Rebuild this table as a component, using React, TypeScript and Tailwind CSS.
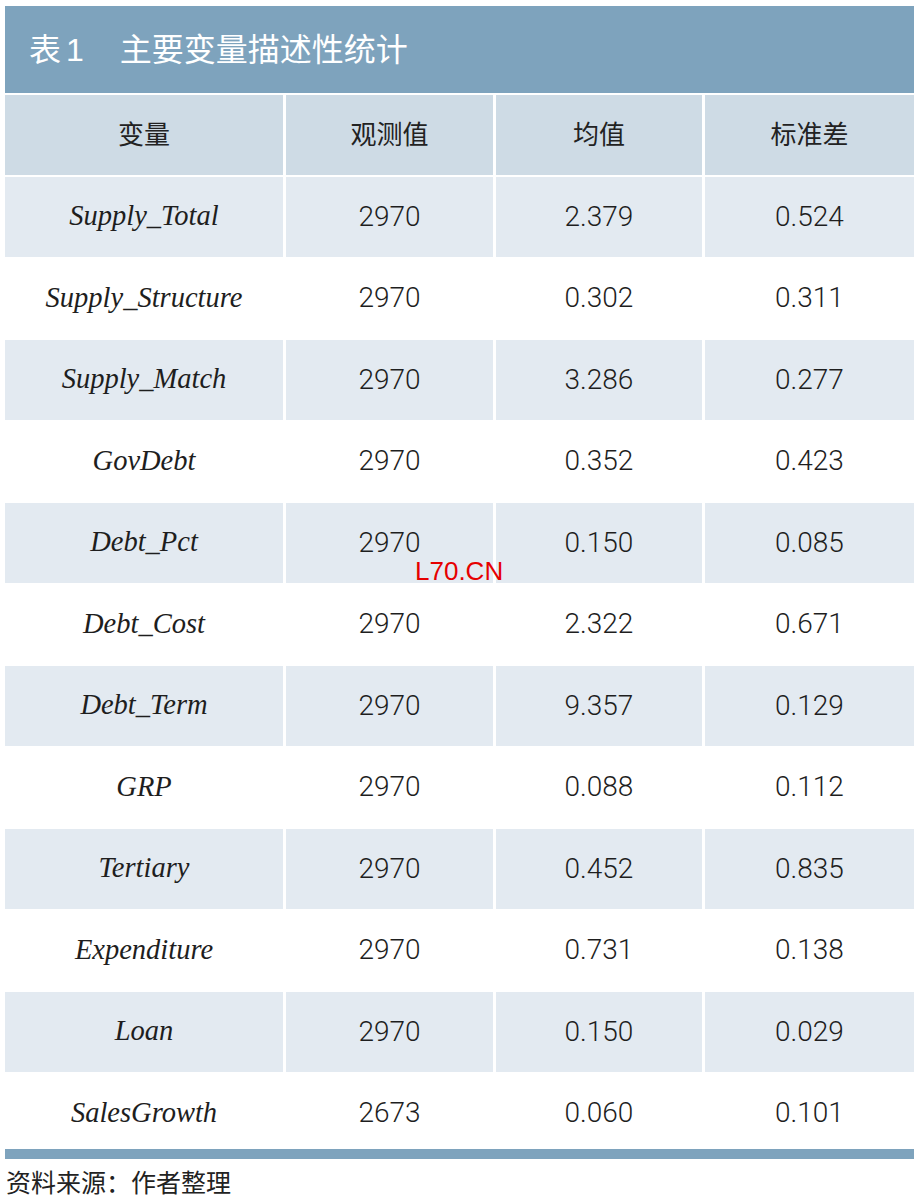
const rows = [
  ["Supply_Total", "2970", "2.379", "0.524"],
  ["Supply_Structure", "2970", "0.302", "0.311"],
  ["Supply_Match", "2970", "3.286", "0.277"],
  ["GovDebt", "2970", "0.352", "0.423"],
  ["Debt_Pct", "2970", "0.150", "0.085"],
  ["Debt_Cost", "2970", "2.322", "0.671"],
  ["Debt_Term", "2970", "9.357", "0.129"],
  ["GRP", "2970", "0.088", "0.112"],
  ["Tertiary", "2970", "0.452", "0.835"],
  ["Expenditure", "2970", "0.731", "0.138"],
  ["Loan", "2970", "0.150", "0.029"],
  ["SalesGrowth", "2673", "0.060", "0.101"],
];

const cjk = "font-['Liberation_Sans','Noto_Sans_CJK_SC',sans-serif]";

export default function App() {
  return (
    <div className="relative min-h-[1201px] w-[923px] bg-white pl-[5px] pt-[6px]">
      {/* title bar */}
      <div
        className={`flex h-[87px] w-[909px] items-center bg-[#7ea3bd] pl-[24px] text-[32px] leading-none text-white ${cjk}`}
      >
        <span>表</span>
        <span className="ml-[5px]">1</span>
        <span className="ml-[36px]">主要变量描述性统计</span>
      </div>

      <div className="mt-[2px] flex w-[909px] flex-col gap-[2px]">
        {/* header */}
        <div className="grid h-[80px] grid-cols-[278px_207px_206px_209px] gap-[3px]">
          {["变量", "观测值", "均值", "标准差"].map((h) => (
            <div
              key={h}
              className={`flex items-center justify-center bg-[#cedbe5] text-[26px] text-[#222] ${cjk}`}
            >
              {h}
            </div>
          ))}
        </div>

        {rows.map((r, i) => (
          <div
            key={r[0]}
            className={`grid grid-cols-[278px_207px_206px_209px] gap-[3px] ${
              i === rows.length - 1 ? "h-[75.5px] pt-[4px]" : "h-[79.5px]"
            }`}
          >
            {r.map((c, j) => (
              <div
                key={j}
                className={`flex items-center justify-center text-[#1e1e1e] ${
                  i % 2 === 0 ? "bg-[#e3eaf1]" : "bg-white"
                } ${
                  j === 0
                    ? "font-['Liberation_Serif',serif] text-[28.5px] italic"
                    : "font-['Roboto',sans-serif] text-[28px] font-light"
                }`}
              >
                {c}
              </div>
            ))}
          </div>
        ))}
      </div>

      {/* bottom rule */}
      <div className="h-[10px] w-[909px] bg-[#7ea3bd]" />

      <div className={`mt-[9px] pl-[1px] text-[25px] leading-[30px] text-[#222] ${cjk}`}>
        资料来源：作者整理
      </div>

      {/* watermark */}
      <div className="absolute left-[415px] top-[558px] font-['Liberation_Sans',sans-serif] text-[26px] leading-none text-[#e60000]">
        L70.CN
      </div>
    </div>
  );
}
